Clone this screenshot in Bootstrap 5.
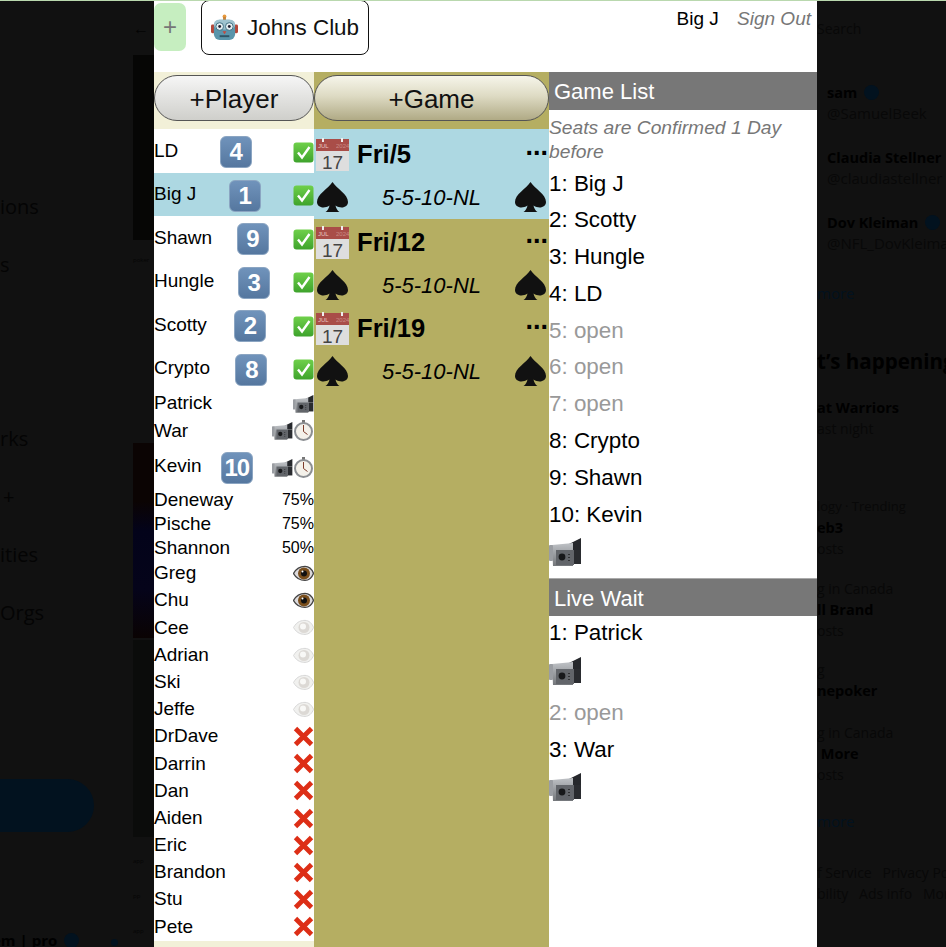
<!DOCTYPE html>
<html lang="en">
<head>
    <meta charset="UTF-8">
    <meta name="viewport" content="width=device-width, initial-scale=1.0">
    <title>Johns Club</title>
    <link rel="stylesheet" href="https://cdn.jsdelivr.net/npm/bootstrap@5.3.0/dist/css/bootstrap.min.css">
    <script defer src="https://cdn.jsdelivr.net/npm/bootstrap@5.3.0/dist/js/bootstrap.bundle.min.js"></script>
    <style>
        html, body { height: 947px; overflow: hidden; }
        body { background: #111; font-family: "Liberation Sans", Arial, sans-serif; color: #000; }
        .top-line { height: 1px; background: #b9d8ae; }
        .stage { height: 946px; overflow: hidden; }

        /* dimmed page behind the app */
        .back-left { width: 154px; flex: none; overflow: hidden; font-family: "Open Sans", sans-serif; color: #040404; }
        .back-nav { width: 133px; flex: none; padding-top: 177px; font-size: 20px; white-space: nowrap; }
        .back-nav .nav-line { height: 58px; line-height: 58px; }
        .nav-line.nudge { padding-left: 3px; }
        .post-btn { width: 94px; height: 53px; margin-top: 137px; background: #02121f; border-radius: 0 27px 27px 0; }
        .back-user { height: 24px; line-height: 24px; margin: 96px 0 0 -8px; font-weight: 700; font-size: 15px; color: #000; }
        .dot-mark { display: inline-block; width: 7px; height: 7px; border-radius: 50%; background: #02121f; margin-left: 32px; }
        .back-strip { width: 21px; flex: none; font-size: 6px; color: #050505; white-space: nowrap; }
        .strip-arrow { height: 54px; line-height: 54px; font-size: 16px; color: #030303; }
        .pic-a { height: 185px; background: #060605; }
        .strip-label { height: 35px; line-height: 35px; }
        .pic-b { height: 195px; margin-top: 165px; background: linear-gradient(#0b0403 30%, #03031a 45%, #05041a 75%, #0a0303); }
        .pic-c { height: 197px; margin-top: 2px; background: #0b0c0b; }
        .back-right { flex: 1; min-width: 0; overflow: hidden; font-family: "Open Sans", sans-serif; color: #080808; white-space: nowrap; font-size: 14px; line-height: 21px; }
        .back-right b { color: #000; font-size: 14.5px; }
        .back-right .dim-blue { color: #02121f; font-size: 15px; }
        .back-right .ind { padding-left: 10px; }
        .back-right .handle { font-size: 15px; }
        .back-right .small-meta { font-size: 13px; }
        .tick { display: inline-block; width: 15px; height: 15px; border-radius: 50%; background: #02121f; vertical-align: -2px; margin-left: 3px; }
        .back-happening { font-size: 20.5px; font-weight: 700; color: #000; line-height: 28px; }
        .sp-3 { margin-top: 3px; }
        .sp-7 { margin-top: 7px; }
        .sp-17 { margin-top: 17px; }
        .sp-18 { margin-top: 18px; }
        .sp-19 { margin-top: 19px; }
        .sp-21 { margin-top: 21px; }
        .sp-22 { margin-top: 22px; }
        .sp-23 { margin-top: 23px; }
        .sp-26 { margin-top: 26px; }
        .sp-29 { margin-top: 29px; }
        .sp-30 { margin-top: 30px; }
        .sp-43 { margin-top: 43px; }
        .sp-57 { margin-top: 57px; }

        /* app */
        .app-shell { width: 663px; flex: none; background: #fff; }
        .app-head { height: 71px; }
        .club-add { width: 32px; height: 48px; margin-top: 2px; background: #c6eec0; color: #777; border: 0; border-radius: 7px; padding: 0; font-size: 24px; line-height: 48px; }
        .club-btn { width: 168px; height: 55px; margin: -1px 0 0 15px; background: #fff; border: 1.5px solid #111; border-radius: 8px; font-size: 22.4px; padding: 0 0 0 9px; gap: 9px; color: #111; }
        .who { font-size: 19px; padding: 7px 6px 0 0; line-height: 22px; }
        .who i { color: #777; margin-left: 13px; }
        .col-players { width: 160px; flex: none; }
        .col-games { width: 235px; flex: none; background: #b5ae62; }
        .col-seats { flex: 1; min-width: 0; }
        .bar-a, .bar-b { height: 57px; padding-top: 3px; }
        .bar-a { background: #f2f0d8; }
        .add-btn { display: block; width: 100%; height: 46px; padding: 0; border: 1.5px solid #555; font-size: 26px; line-height: 46px; color: #111; }
        .add-btn.plain { background: linear-gradient(#f6f6f6, #e4e4e2 45%, #cfcfcb); }
        .add-btn.olive { background: linear-gradient(#f6f5ea, #dedbc4 45%, #b0aa85); }

        .player { font-size: 19px; white-space: nowrap; }
        .player.tall { height: 43.5px; }
        .player.mid { height: 27.2px; }
        .player.pct { height: 24px; }
        .on { background: #add8e2; }
        .keycap { width: 32px; height: 32px; margin-top: 3px; border-radius: 6px; background: linear-gradient(#7093bb, #55779f); border: 1px solid #8ba5c2; color: #fff; font-size: 24px; font-weight: 700; line-height: 30px; text-align: center; letter-spacing: -1px; }
        .pct-val { font-size: 16px; }
        .ic-21 { width: 21px; height: 21px; display: block; flex: none; }
        .tall .marks { margin-top: 3px; }

        .game { height: 86.5px; }
        .game.on { height: 90px; margin-bottom: -2px; }
        .game-top { height: 50px; padding-left: 2px; }
        .game-date { font-size: 25.6px; font-weight: 700; margin-left: 8px; }
        .game-more { font-size: 27px; font-weight: 700; margin-left: auto; line-height: 27px; padding: 0 1px 16px 0; }
        .game-bot { height: 36.5px; padding: 0 2px; }
        .game-name { font-size: 22px; font-style: italic; flex: 1; text-align: center; }
        .spade { width: 33px; height: 33px; flex: none; }
        .cal { width: 33px; height: 33px; flex: none; overflow: visible; }
        .cal text { font-family: "Liberation Sans", sans-serif; font-size: 19px; fill: #444; }
        .cal .mon { font-size: 6px; fill: #e8c4c0; }

        .sect { height: 38px; background: #777; color: #fff; font-size: 22px; line-height: 40px; padding-left: 5px; }
        .sect.live { border-top: 1px solid #aaa; margin-top: 9.5px; }
        .seat-note { font-size: 19.25px; font-style: italic; color: #777; line-height: 24px; margin-top: 6px; padding-bottom: 1.5px; }
        .seat { font-size: 22.4px; height: 36.8px; line-height: 36.8px; }
        .seat.open { color: #999; }
        .seat-cam { display: block; width: 33px; height: 33px; margin: 2px 0 8px; }
        .wait-rows { margin-top: -1px; }
    </style>
</head>
<body>
    <svg width="0" height="0" class="position-absolute">
        <defs>
            <linearGradient id="gBody" x1="0" y1="0" x2="0" y2="1"><stop offset="0" stop-color="#bfc2c6"/><stop offset="1" stop-color="#74777b"/></linearGradient>
            <linearGradient id="gGreen" x1="0" y1="0" x2="0" y2="1"><stop offset="0" stop-color="#6fd04a"/><stop offset="1" stop-color="#3ea32c"/></linearGradient>
            <symbol id="check" viewBox="0 0 21 21">
                <rect x=".5" y=".5" width="20" height="20" rx="3" fill="url(#gGreen)"/>
                <path d="M5 10.5l4 5 7.5-10.5" fill="none" stroke="#fff" stroke-width="2.4"/>
            </symbol>
            <symbol id="cross" viewBox="0 0 21 21">
                <path d="M2.5 2.5l16 16M18.5 2.5l-16 16" fill="none" stroke="#dd2e16" stroke-width="4.8"/>
            </symbol>
            <symbol id="cam" viewBox="0 0 33 33">
                <path d="M20 9l12-6v12H22z" fill="#26282c"/>
                <path d="M3 10l21-2v23H4z" fill="url(#gBody)"/>
                <rect x="0" y="10" width="4" height="16" rx="1" fill="#9a9da2"/>
                <rect x="7" y="15" width="18" height="15" fill="#62656a"/>
                <rect x="25" y="15" width="7" height="14" fill="#2a2c30"/>
                <circle cx="13" cy="22" r="3.4" fill="#17181a"/>
                <path d="M20 19v1M20 22v1M20 25v1" stroke="#111" stroke-width="1.2"/>
            </symbol>
            <symbol id="watch" viewBox="0 0 21 21">
                <rect x="9" y="0" width="3" height="3" fill="#777"/>
                <circle cx="10.5" cy="11.5" r="8.5" fill="#f4f1ea" stroke="#8c8f93" stroke-width="2"/>
                <path d="M10.5 11.5V5M10.5 11.5l4 3" stroke="#7d3b2a" stroke-width="1"/>
            </symbol>
            <symbol id="eye" viewBox="0 0 21 21">
                <path d="M.5 10.5C4 4 9 3.4 12 3.4c4 0 7 3 8.5 7-1.5 4-4.5 7-8.5 7-3 0-8-.6-11.5-6.9z" fill="#dcdadc" stroke="#444" stroke-width="1.4"/>
                <circle cx="11" cy="10.5" r="6" fill="#7a4f1d"/>
                <circle cx="11" cy="10.5" r="3" fill="#111"/>
                <circle cx="9.5" cy="8.5" r="1" fill="#fff"/>
            </symbol>
            <symbol id="eye-off" viewBox="0 0 21 21">
                <path d="M.5 10.5C4 4 9 3.4 12 3.4c4 0 7 3 8.5 7-1.5 4-4.5 7-8.5 7-3 0-8-.6-11.5-6.9z" fill="#f1f1ef" stroke="#d8d8d8" stroke-width="1"/>
                <circle cx="11" cy="10.5" r="5.5" fill="#dcd9d5"/>
                <circle cx="10" cy="9.5" r="3" fill="#f8f8f6"/>
            </symbol>
            <symbol id="spade" viewBox="0 0 33 33">
                <path d="M16.5 1C12 8 1 13 1 21c0 5 6.5 7.5 12.5 3.5C13 27 11.5 30 9.5 31h14c-2-1-3.5-4-4-6.5C25.5 28.5 32 26 32 21 32 13 21 8 16.5 1z" fill="#111"/>
            </symbol>
            <symbol id="robot" viewBox="0 0 28 28">
                <circle cx="14" cy="2.5" r="2" fill="#e99a3c"/>
                <rect x="12.5" y="3" width="3" height="4" fill="#c9843a"/>
                <rect x="0" y="11" width="4" height="9" rx="1.5" fill="#b5483a"/>
                <rect x="24" y="11" width="4" height="9" rx="1.5" fill="#b5483a"/>
                <rect x="3" y="6" width="22" height="21" rx="6" fill="#5a95ab"/>
                <rect x="3" y="6" width="22" height="10" rx="5" fill="#9fc3cf"/>
                <circle cx="9" cy="13" r="4" fill="#e3edf0" stroke="#3e6f82"/>
                <circle cx="19" cy="13" r="4" fill="#e3edf0" stroke="#3e6f82"/>
                <circle cx="9" cy="13" r="1.5" fill="#223"/>
                <circle cx="19" cy="13" r="1.5" fill="#223"/>
                <path d="M12 18h4l-2 3z" fill="#c8463a"/>
                <path d="M9 23h10" stroke="#2f5566" stroke-width="2"/>
            </symbol>
        </defs>
    </svg>

    <div class="top-line"></div>
    <div class="stage d-flex">
        <div class="back-left d-flex">
            <div class="back-nav">
                <div class="nav-line">ions</div>
                <div class="nav-line">s</div>
                <div class="nav-line"></div>
                <div class="nav-line"></div>
                <div class="nav-line">rks</div>
                <div class="nav-line nudge">+</div>
                <div class="nav-line">ities</div>
                <div class="nav-line">Orgs</div>
                <div class="post-btn"></div>
                <div class="back-user">em | pro <span class="tick"></span><span class="dot-mark"></span></div>
            </div>
            <div class="back-strip">
                <div class="strip-arrow">&larr;</div>
                <div class="pic-a"></div>
                <div class="strip-label sp-3">poker</div>
                <div class="pic-b"></div>
                <div class="pic-c"></div>
                <div class="strip-label sp-7">app</div>
                <div class="strip-label">pp</div>
                <div class="strip-label">app</div>
            </div>
        </div>

        <div class="app-shell">
            <div class="app-head d-flex">
                <button class="club-add" type="button">+</button>
                <button class="club-btn d-flex align-items-center" type="button">
                    <svg width="27" height="27"><use href="#robot"/></svg>Johns Club
                </button>
                <div class="who ms-auto">Big J <i>Sign Out</i></div>
            </div>
            <div class="d-flex">
                <div class="col-players">
                    <div class="bar-a"><button class="btn rounded-pill add-btn plain" type="button">+Player</button></div>
                    <div id="playerList"></div>
                </div>
                <div class="col-games">
                    <div class="bar-b"><button class="btn rounded-pill add-btn olive" type="button">+Game</button></div>
                    <div id="gameList"></div>
                </div>
                <div class="col-seats">
                    <div class="sect">Game List</div>
                    <div class="seat-note">Seats are Confirmed 1 Day before</div>
                    <div id="seatList"></div>
                    <div class="sect live">Live Wait</div>
                    <div id="waitList" class="wait-rows"></div>
                </div>
            </div>
        </div>

        <div class="back-right">
            <div class="sp-17">Search</div>
            <div class="sp-43 ind"><b>sam</b> <span class="tick"></span></div>
            <div class="ind handle">@SamuelBeek</div>
            <div class="ind sp-23"><b>Claudia Stellner</b></div>
            <div class="ind handle">@claudiastellner</div>
            <div class="ind sp-23"><b>Dov Kleiman</b> <span class="tick"></span></div>
            <div class="ind handle">@NFL_DovKleiman</div>
            <div class="dim-blue sp-29">more</div>
            <div class="back-happening sp-43">t&rsquo;s happening</div>
            <div class="sp-22"><b>at Warriors</b></div>
            <div>ast night</div>
            <div class="sp-57 small-meta">logy &middot; Trending</div>
            <div><b>eb3</b></div>
            <div>osts</div>
            <div class="sp-19">g in Canada</div>
            <div><b>ll Brand</b></div>
            <div>osts</div>
            <div class="sp-18">g</div>
            <div><b>nepoker</b></div>
            <div class="sp-21">g in Canada</div>
            <div><b>&nbsp;More</b></div>
            <div>osts</div>
            <div class="dim-blue sp-26">more</div>
            <div class="sp-30">f Service &nbsp; Privacy Po</div>
            <div>bility &nbsp; Ads info &nbsp; More</div>
        </div>
    </div>

    <script>
        const icon = (name, cls = "ic-21") => `<svg class="${cls}"><use href="#${name}"/></svg>`;

        const players = [
            ["LD", "tall", 4, ["check"]],
            ["Big J", "tall on", 1, ["check"]],
            ["Shawn", "tall", 9, ["check"]],
            ["Hungle", "tall", 3, ["check"]],
            ["Scotty", "tall", 2, ["check"]],
            ["Crypto", "tall", 8, ["check"]],
            ["Patrick", "mid", 0, ["cam"]],
            ["War", "mid", 0, ["cam", "watch"]],
            ["Kevin", "tall", 10, ["cam", "watch"]],
            ["Deneway", "pct", 0, "75%"],
            ["Pische", "pct", 0, "75%"],
            ["Shannon", "pct", 0, "50%"],
            ["Greg", "mid", 0, ["eye"]],
            ["Chu", "mid", 0, ["eye"]],
            ["Cee", "mid", 0, ["eye-off"]],
            ["Adrian", "mid", 0, ["eye-off"]],
            ["Ski", "mid", 0, ["eye-off"]],
            ["Jeffe", "mid", 0, ["eye-off"]],
            ["DrDave", "mid", 0, ["cross"]],
            ["Darrin", "mid", 0, ["cross"]],
            ["Dan", "mid", 0, ["cross"]],
            ["Aiden", "mid", 0, ["cross"]],
            ["Eric", "mid", 0, ["cross"]],
            ["Brandon", "mid", 0, ["cross"]],
            ["Stu", "mid", 0, ["cross"]],
            ["Pete", "mid", 0, ["cross"]]
        ];
        document.getElementById("playerList").innerHTML = players.map(([name, cls, seat, marks]) => `
            <div class="player ${cls} d-flex align-items-center justify-content-between">
                <span>${name}</span>
                ${seat ? `<span class="keycap">${seat}</span>` : ""}
                ${typeof marks === "string"
                    ? `<span class="pct-val">${marks}</span>`
                    : `<span class="marks d-flex">${marks.map(m => icon(m)).join("")}</span>`}
            </div>`).join("") + `<div class="bar-a"></div>`;

        const games = ["Fri/5", "Fri/12", "Fri/19"];
        document.getElementById("gameList").innerHTML = games.map((day, i) => `
            <div class="game ${i === 0 ? "on" : ""}">
                <div class="game-top d-flex align-items-center">
                    <svg class="cal" viewBox="0 0 33 33">
                        <rect y="1" width="33" height="12" fill="#a94d48"/>
                        <rect y="13" width="33" height="20" fill="#dedede"/>
                        <rect x="6" width="2" height="4" fill="#eee"/><rect x="25" width="2" height="4" fill="#eee"/>
                        <text class="mon" x="2" y="10">JUL</text>
                        <text class="mon" x="20" y="10" opacity=".5">2024</text>
                        <text x="16.5" y="30.5" text-anchor="middle">17</text>
                    </svg>
                    <span class="game-date">${day}</span>
                    <span class="game-more">...</span>
                </div>
                <div class="game-bot d-flex align-items-center">
                    ${icon("spade", "spade")}
                    <span class="game-name">5-5-10-NL</span>
                    ${icon("spade", "spade")}
                </div>
            </div>`).join("");

        const seatRows = list => list.map(row => row === "cam"
            ? `<svg class="seat-cam"><use href="#cam"/></svg>`
            : `<div class="seat ${row.endsWith("open") ? "open" : ""}">${row}</div>`).join("");

        document.getElementById("seatList").innerHTML = seatRows(["1: Big J", "2: Scotty", "3: Hungle", "4: LD", "5: open", "6: open", "7: open", "8: Crypto", "9: Shawn", "10: Kevin", "cam"]);
        document.getElementById("waitList").innerHTML = seatRows(["1: Patrick", "cam", "2: open", "3: War", "cam"]);
    </script>
</body>
</html>
